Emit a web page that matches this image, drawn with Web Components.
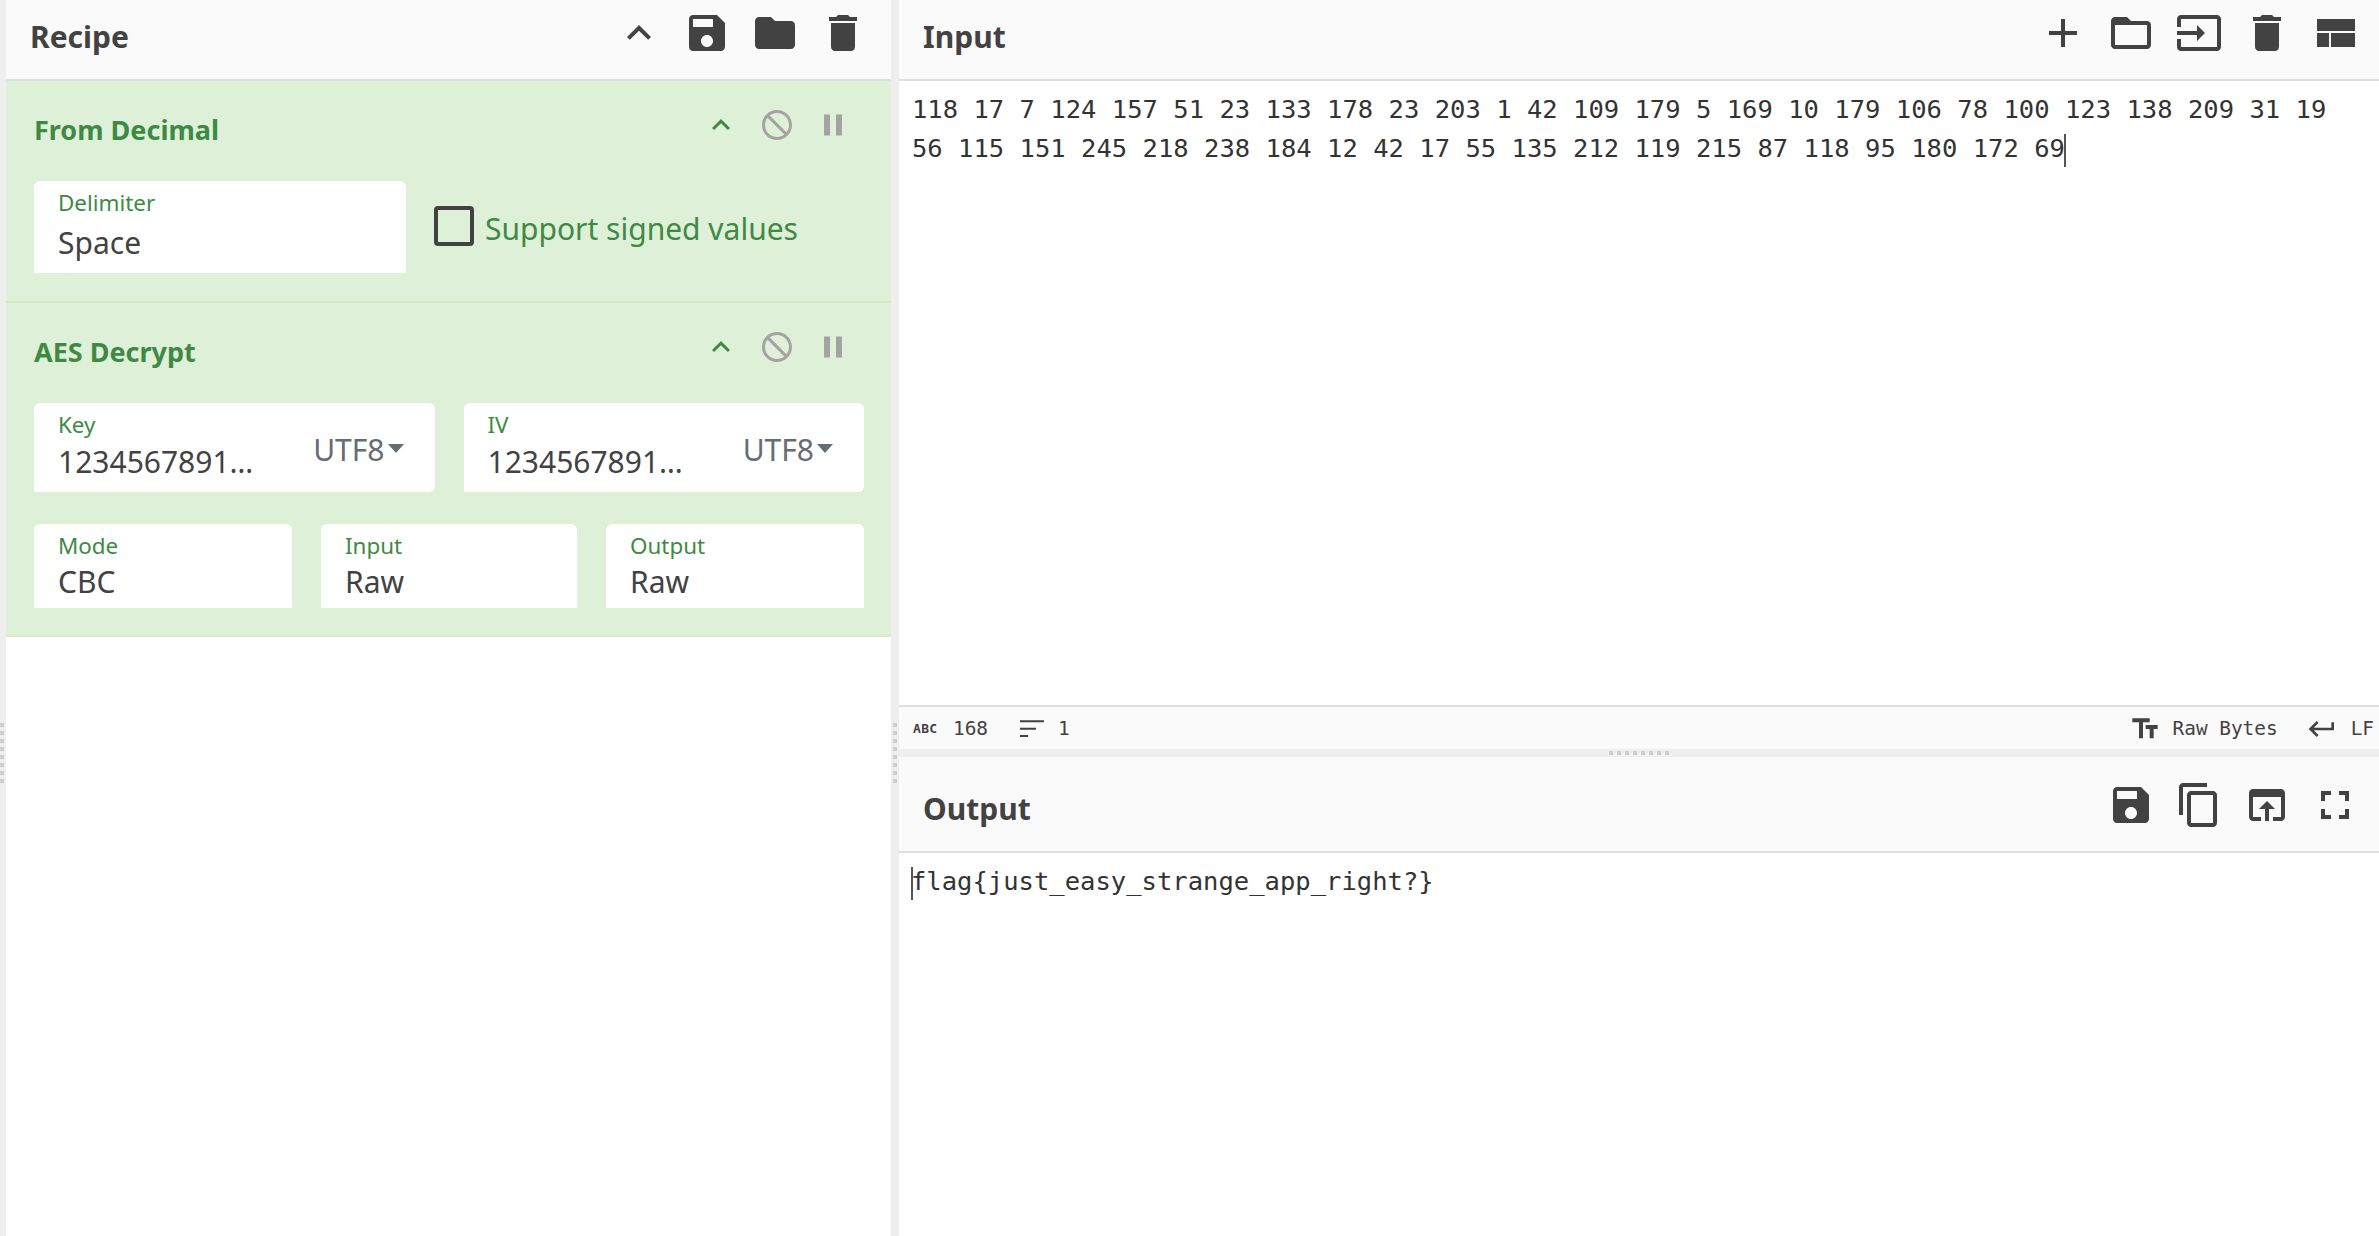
<!DOCTYPE html>
<html>
<head>
<meta charset="utf-8">
<title>CyberChef</title>
<style>
  html, body { margin: 0; height: 100%; overflow: hidden; background: #fff; }
  body { font-family: "Noto Sans", sans-serif; color: #424242; }
</style>
</head>
<body>
<cc-app>
  <cc-panel slot="recipe">
    <cc-header label="Recipe" style="--end:14px">
      <cc-btn icon="up"></cc-btn><cc-btn icon="save"></cc-btn><cc-btn icon="folder"></cc-btn><cc-btn icon="trash"></cc-btn>
    </cc-header>
    <cc-op label="From Decimal" style="--pb:28px">
      <cc-row style="--cols:372px 1fr">
        <cc-field label="Delimiter" value="Space" style="--h:92px;--gap:6px;--radius:6px 6px 0 0"></cc-field>
        <cc-check label="Support signed values"></cc-check>
      </cc-row>
    </cc-op>
    <cc-op label="AES Decrypt">
      <cc-row style="--cols:1fr 1fr">
        <cc-field label="Key" value="1234567891…" option="UTF8" style="--h:89px;--gap:3px"></cc-field>
        <cc-field label="IV" value="1234567891…" option="UTF8" style="--h:89px;--gap:3px"></cc-field>
      </cc-row>
      <cc-row style="--cols:258px 256px 258px">
        <cc-field label="Mode" value="CBC" style="--h:84px;--gap:2px;--radius:6px 6px 0 0"></cc-field>
        <cc-field label="Input" value="Raw" style="--h:84px;--gap:2px;--radius:6px 6px 0 0"></cc-field>
        <cc-field label="Output" value="Raw" style="--h:84px;--gap:2px;--radius:6px 6px 0 0"></cc-field>
      </cc-row>
    </cc-op>
  </cc-panel>
  <cc-panel slot="input">
    <cc-header label="Input" style="--end:10px">
      <cc-btn icon="add"></cc-btn><cc-btn icon="folderOpen"></cc-btn><cc-btn icon="input"></cc-btn><cc-btn icon="trash"></cc-btn><cc-btn icon="layout"></cc-btn>
    </cc-header>
    <cc-text caret="end" style="flex:1">118 17 7 124 157 51 23 133 178 23 203 1 42 109 179 5 169 10 179 106 78 100 123 138 209 31 19 56 115 151 245 218 238 184 12 42 17 55 135 212 119 215 87 118 95 180 172 69</cc-text>
    <cc-status></cc-status>
  </cc-panel>
  <cc-panel slot="output">
    <cc-header label="Output" style="--end:10px;--h:96px;--top:24px">
      <cc-btn icon="save"></cc-btn><cc-btn icon="copy"></cc-btn><cc-btn icon="open"></cc-btn><cc-btn icon="full"></cc-btn>
    </cc-header>
    <cc-text caret="start" style="flex:1">flag{just_easy_strange_app_right?}</cc-text>
  </cc-panel>
</cc-app>

<script>
// Trazados de los iconos (material icons, viewBox 24)
const ICONS = {
  up: "M7.41 15.41L12 10.83l4.59 4.58L18 14l-6-6-6 6z",
  save: "M17 3H5c-1.11 0-2 .9-2 2v14c0 1.1.89 2 2 2h14c1.1 0 2-.9 2-2V7l-4-4zm-5 16c-1.66 0-3-1.34-3-3s1.34-3 3-3 3 1.34 3 3-1.34 3-3 3zm3-10H5V5h10v4z",
  folder: "M10 4H4c-1.1 0-1.99.9-1.99 2L2 18c0 1.1.9 2 2 2h16c1.1 0 2-.9 2-2V8c0-1.1-.9-2-2-2h-8l-2-2z",
  trash: "M6 19c0 1.1.9 2 2 2h8c1.1 0 2-.9 2-2V7H6v12zM19 4h-3.5l-1-1h-5l-1 1H5v2h14V4z",
  add: "M19 13h-6v6h-2v-6H5v-2h6V5h2v6h6v2z",
  folderOpen: "M20 6h-8l-2-2H4c-1.1 0-1.99.9-1.99 2L2 18c0 1.1.9 2 2 2h16c1.1 0 2-.9 2-2V8c0-1.1-.9-2-2-2zm0 12H4V8h16v10z",
  input: "M21 3.01H3c-1.1 0-2 .9-2 2V9h2V4.99h18v14.03H3V15H1v4.01c0 1.1.9 1.98 2 1.98h18c1.1 0 2-.88 2-1.98v-14c0-1.11-.9-2-2-2zM11 16l4-4-4-4v3H1v2h10v3z",
  layout: "M3 19h6v-7H3v7zm7 0h12v-7H10v7zM3 5v6h19V5H3z",
  copy: "M16 1H4c-1.1 0-2 .9-2 2v14h2V3h12V1zm3 4H8c-1.1 0-2 .9-2 2v14c0 1.1.9 2 2 2h11c1.1 0 2-.9 2-2V7c0-1.1-.9-2-2-2zm0 16H8V7h11v14z",
  open: "M19 4H5c-1.11 0-2 .9-2 2v12c0 1.1.89 2 2 2h4v-2H5V8h14v10h-4v2h4c1.1 0 2-.9 2-2V6c0-1.1-.89-2-2-2zm-7 6l-4 4h3v6h2v-6h3l-4-4z",
  full: "M7 14H5v5h5v-2H7v-3zm-2-4h2V7h3V5H5v5zm12 7h-3v2h5v-5h-2v3zM14 5v2h3v3h2V5h-5z",
  ban: "M12 2C6.48 2 2 6.48 2 12s4.48 10 10 10 10-4.48 10-10S17.52 2 12 2zm0 18c-4.42 0-8-3.58-8-8 0-1.85.63-3.55 1.69-4.9L16.9 18.31C15.55 19.37 13.85 20 12 20zm6.31-3.1L7.1 5.69C8.45 4.63 10.15 4 12 4c4.42 0 8 3.58 8 8 0 1.85-.63 3.55-1.69 4.9z",
  pause: "M6 19h4V5H6v14zm8-14v14h4V5h-4z",
  type: "M2.5 4v3h5v12h3V7h5V4h-13zm19 5h-9v3h3v7h3v-7h3V9z",
  lines: "M3 5.5h18v1.5H3zM3 11h12v1.5H3zM3 16.5h6v1.5H3z",
  ret: "M19 7v4H5.83l3.58-3.59L8 6l-6 6 6 6 1.41-1.41L5.83 13H21V7z"
};

// Helper para no repetir attachShadow + innerHTML en cada componente
class Base extends HTMLElement {
  render(html) {
    this.attachShadow({ mode: "open" });
    this.shadowRoot.innerHTML = html;
  }
}

class CcIcon extends Base {
  connectedCallback() {
    const size = this.getAttribute("size") || 48;
    this.render(`
      <style>:host { display: block; width: ${size}px; height: ${size}px; flex: none; } svg { display: block; fill: currentColor; }</style>
      <svg width="${size}" height="${size}" viewBox="0 0 24 24"><path d="${ICONS[this.getAttribute("name")]}"/></svg>`);
  }
}
customElements.define("cc-icon", CcIcon);

class CcBtn extends Base {
  connectedCallback() {
    const size = this.getAttribute("size") || 48;
    this.render(`
      <style>
        :host { display: flex; justify-content: center; width: var(--btn, 68px); color: var(--btn-color, #424242); }
      </style>
      <cc-icon name="${this.getAttribute("icon")}" size="${size}"></cc-icon>`);
  }
}
customElements.define("cc-btn", CcBtn);

class CcGutter extends Base {
  connectedCallback() {
    this.render(`
      <style>
        :host { display: flex; flex-direction: column; background: #eee; padding-top: 723px; box-sizing: border-box; }
        .dots { width: 4px; height: 64px; margin-left: var(--dot-left, 0);
          background: repeating-linear-gradient(to bottom, #cfcfcf 0 4px, transparent 4px 8px); }
      </style>
      <div class="dots"></div>`);
  }
}
customElements.define("cc-gutter", CcGutter);

class CcApp extends Base {
  constructor() {
    super();
    this.render(`
      <style>
        :host { display: grid; width: 2379px; height: 1236px;
          grid-template-columns: 6px 885px 8px 1fr; grid-template-rows: 749px 8px 1fr; background: #fff; }
        .left { grid-column: 1; grid-row: 1 / 4; }
        .recipe { grid-column: 2; grid-row: 1 / 4; display: flex; }
        .mid { grid-column: 3; grid-row: 1 / 4; --dot-left: 2px; }
        .in { grid-column: 4; grid-row: 1; display: flex; }
        .split { grid-column: 4; grid-row: 2; background: #eee; display: flex; justify-content: center; align-items: center; }
        .split i { display: block; width: 61px; height: 4px;
          background: repeating-linear-gradient(to right, #cfcfcf 0 4px, transparent 4px 8px); }
        .out { grid-column: 4; grid-row: 3; display: flex; }
        ::slotted(cc-panel) { flex: 1; min-width: 0; }
      </style>
      <cc-gutter class="left"></cc-gutter>
      <div class="recipe"><slot name="recipe"></slot></div>
      <cc-gutter class="mid"></cc-gutter>
      <div class="in"><slot name="input"></slot></div>
      <div class="split"><i></i></div>
      <div class="out"><slot name="output"></slot></div>`);
  }
}
customElements.define("cc-app", CcApp);

class CcPanel extends Base {
  constructor() {
    super();
    this.render(`
      <style>:host { display: flex; flex-direction: column; min-height: 0; background: #fff; }</style>
      <slot></slot>`);
  }
}
customElements.define("cc-panel", CcPanel);

class CcHeader extends Base {
  connectedCallback() {
    this.render(`
      <style>
        :host { display: flex; box-sizing: border-box; background: #fafafa; border-bottom: 2px solid #dfdfdf;
          padding: var(--top, 9px) var(--end) 0 24px; height: var(--h, 81px); flex: none; }
        .t { flex: 1; font: 700 30px/55px "Noto Sans", sans-serif; color: #424242; }
      </style>
      <div class="t">${this.getAttribute("label")}</div>
      <slot></slot>`);
  }
}
customElements.define("cc-header", CcHeader);

class CcOp extends Base {
  connectedCallback() {
    this.render(`
      <style>
        :host { display: block; background: #dff0d8; border-bottom: 2px solid #d6e9c6; padding: 0 27px var(--pb, 27px) 28px; }
        .head { display: flex; height: 100px; box-sizing: border-box; padding-top: 26px; padding-right: 3px; }
        .t { flex: 1; font: 700 27px/46px "Noto Sans", sans-serif; color: #3e8a45; }
        .ctl { display: flex; --btn: 56px; }
        .rows { display: flex; flex-direction: column; gap: 32px; }
      </style>
      <div class="head">
        <div class="t">${this.getAttribute("label")}</div>
        <div class="ctl">
          <cc-btn style="--btn-color:#3e8a45" icon="up" size="36"></cc-btn>
          <cc-btn style="--btn-color:#a3a3a3" icon="ban" size="36"></cc-btn>
          <cc-btn style="--btn-color:#a3a3a3" icon="pause" size="36"></cc-btn>
        </div>
      </div>
      <div class="rows"><slot></slot></div>`);
  }
}
customElements.define("cc-op", CcOp);

class CcRow extends Base {
  constructor() {
    super();
    this.render(`
      <style>:host { display: grid; grid-template-columns: var(--cols); column-gap: 29px; align-items: start; }</style>
      <slot></slot>`);
  }
}
customElements.define("cc-row", CcRow);

class CcField extends Base {
  connectedCallback() {
    const option = this.getAttribute("option");
    this.render(`
      <style>
        :host { display: flex; align-items: flex-start; height: var(--h); box-sizing: border-box; background: #fff; min-width: 0;
          border-radius: var(--radius, 6px 6px 6px 0); padding: 8px 25px 0 24px; }
        .main { flex: 1; min-width: 0; }
        .label { font: 400 22.4px/28px "Noto Sans", sans-serif; color: #3e8a45; }
        .value { font: 400 30px/40px "Noto Sans", sans-serif; color: #424242; margin-top: var(--gap); white-space: nowrap; }
        .opt { display: flex; align-items: center; gap: 3px; margin-top: 19px; margin-right: 6px; font: 400 30px/40px "Noto Sans", sans-serif; color: #646d75; }
        .opt i { width: 0; height: 0; border: 8px solid transparent; border-top: 9px solid #646d75; border-bottom: 0; margin-bottom: 4px; }
      </style>
      <div class="main">
        <div class="label">${this.getAttribute("label")}</div>
        <div class="value">${this.getAttribute("value")}</div>
      </div>
      ${option ? `<div class="opt">${option}<i></i></div>` : ""}`);
  }
}
customElements.define("cc-field", CcField);

class CcCheck extends Base {
  connectedCallback() {
    this.render(`
      <style>
        :host { display: flex; align-items: center; height: 92px; margin-left: -1px; gap: 11px; }
        .box { width: 40px; height: 40px; box-sizing: border-box; border: 4px solid #424242; border-radius: 4px; margin-top: -3px; flex: none; }
        .t { font: 400 30px/40px "Noto Sans", sans-serif; color: #3e8a45; white-space: nowrap; margin-top: 3px; }
      </style>
      <div class="box"></div>
      <div class="t">${this.getAttribute("label")}</div>`);
  }
}
customElements.define("cc-check", CcCheck);

class CcText extends Base {
  connectedCallback() {
    const caret = this.getAttribute("caret");
    this.render(`
      <style>
        :host { display: block; padding: 9px 24px 0 13px; min-height: 0; overflow: hidden;
          font: 400 25.5px/39px "DejaVu Sans Mono", monospace; letter-spacing: 0.02px; color: #333; }
        .c { display: inline-block; width: 0; height: 33px; vertical-align: middle; border-left: 2px solid #555; margin-right: -2px; margin-left: -1px; }
      </style>
      ${caret === "start" ? '<span class="c"></span>' : ""}<slot></slot>${caret === "end" ? '<span class="c"></span>' : ""}`);
  }
}
customElements.define("cc-text", CcText);

class CcStatus extends Base {
  connectedCallback() {
    this.render(`
      <style>
        :host { display: flex; align-items: center; height: 44px; box-sizing: border-box; flex: none; background: #fafafa; border-top: 2px solid #dfdfdf;
          padding: 2px 5px 0 14px; font: 400 19.4px/42px "DejaVu Sans Mono", monospace; color: #424242; }
        .abc { font: 700 13px/12px "DejaVu Sans Mono", monospace; letter-spacing: 0.3px; width: 40px; }
        .n { width: 68px; }
        .lines { margin-left: -5px; margin-right: 10px; }
        .sp { flex: 1; }
        .rb { margin: 0 28px 0 12px; }
        .lf { margin-left: 13px; }
      </style>
      <span class="abc">ABC</span><span class="n">168</span>
      <cc-icon class="lines" name="lines" size="32"></cc-icon><span>1</span>
      <span class="sp"></span>
      <cc-icon name="type" size="32"></cc-icon><span class="rb">Raw Bytes</span>
      <cc-icon name="ret" size="32"></cc-icon><span class="lf">LF</span>`);
  }
}
customElements.define("cc-status", CcStatus);
</script>
</body>
</html>
